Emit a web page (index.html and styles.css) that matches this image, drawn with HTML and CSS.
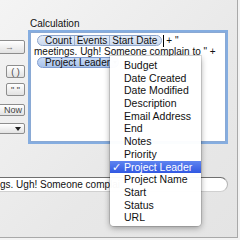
FILE: index.html
```html
<!DOCTYPE html>
<html lang="en">
<head>
  <meta charset="UTF-8" />
  <title>Calculation</title>
  <link rel="stylesheet" href="styles.css">
</head>
<body>

  <div class="window">
    <div class="top">
      <div class="tools">
        <div class="btn btn-wide btn-arrow">&rarr;</div>
        <div class="btn btn-small">( )</div>
        <div class="btn btn-small">" "</div>
        <div class="btn btn-now">Now</div>
        <div class="btn btn-pop"><span class="tri"></span></div>
      </div>

      <div class="calc">
        <div class="label">Calculation</div>
        <div class="editor">
          <div class="line">
            <span class="pill">
              <span class="seg">Count</span><span class="seg">Events</span><span class="seg">Start Date</span>
            </span><span class="caret"></span><span class="txt">+ "</span>
          </div>
          <div class="line">meetings. Ugh! Someone complain to " +</div>
          <div class="line">
            <span class="pill pill-sel"><span class="seg">Project Leader</span><span class="tri tri-pill"></span></span>
          </div>
        </div>
      </div>
    </div>

    <div class="field">
      <span class="field-text">gs. Ugh! Someone complai</span>
    </div>

    <!-- popup menu -->
    <div class="menu">
      <div class="item">Budget</div>
      <div class="item">Date Created</div>
      <div class="item">Date Modified</div>
      <div class="item">Description</div>
      <div class="item">Email Address</div>
      <div class="item">End</div>
      <div class="item">Notes</div>
      <div class="item">Priority</div>
      <div class="item item-on"><span class="check">&#10003;</span>Project Leader</div>
      <div class="item">Project Name</div>
      <div class="item">Start</div>
      <div class="item">Status</div>
      <div class="item">URL</div>
    </div>
  </div>

</body>
</html>
```

FILE: styles.css
```css
* { box-sizing: border-box; }

body {
  margin: 0;
  width: 240px;
  height: 240px;
  overflow: hidden;
  background-color: #f3f3f3;
  font-family: "Liberation Sans", Arial, sans-serif;
  font-size: 10px;
  color: #111;
}

.window {
  position: relative;
  width: 238px;
  height: 238px;
  background: linear-gradient(135deg, #f4f4f4 0%, #e8e8e8 60%, #e4e4e4 100%);
  border-right: 1px solid #a9a9a9;
  border-bottom: 1px solid #a9a9a9;
  overflow: hidden;
}

.top {
  display: flex;
  gap: 5px;
}

/* left column of buttons */
.tools {
  width: 25px;
  padding-top: 40px;
  display: flex;
  flex-direction: column;
  align-items: flex-end;
}

.btn {
  height: 14px;
  border: 1px solid #8d8d8d;
  border-radius: 2px;
  background: linear-gradient(#ffffff, #e2e2e2);
  display: flex;
  align-items: center;
  justify-content: center;
  font-size: 9px;
  color: #444;
  flex-shrink: 0;
}

.btn-wide {
  width: 40px;
  color: #777;
  justify-content: flex-end;
  padding-right: 10px;
}

.btn-small {
  width: 19px;
  height: 13px;
  margin-top: 11px;
}

.btn-small + .btn-small {
  margin-top: 5px;
}

.btn-now {
  width: 34px;
  height: 12px;
  margin-top: 8px;
  justify-content: flex-end;
  padding-right: 2px;
}

.btn-pop {
  width: 40px;
  height: 11px;
  margin-top: 7px;
  justify-content: flex-end;
  padding-right: 3px;
}

.tri {
  width: 0;
  height: 0;
  border-left: 3px solid transparent;
  border-right: 3px solid transparent;
  border-top: 4px solid #222;
}

/* calculation editor */
.calc {
  width: 196px;
  padding-top: 18px;
}

.label {
  font-size: 10px;
  height: 14px;
  line-height: 11px;
}

.editor {
  height: 110px;
  background: #fff;
  border: 1px solid #8aa9d4;
  box-shadow: 0 0 0 2px #85ade0;
  padding: 2px 3px;
}

.line {
  height: 11px;
  line-height: 11px;
  display: flex;
  align-items: center;
  white-space: nowrap;
}

.pill {
  display: inline-flex;
  align-items: center;
  height: 11px;
  margin-left: 3px;
  padding: 0 2px 0 5px;
  border: 1px solid #8ea6cd;
  border-radius: 6px;
  background: linear-gradient(#e4ecf8, #cbd9ee);
}

.seg {
  padding: 0 2px;
  border-left: 1px solid #9db0cf;
  line-height: 9px;
}

.seg:first-child {
  border-left: none;
}

.pill-sel {
  background: linear-gradient(#c9dbf6, #a9c3ec);
  border-color: #7f9cd0;
  padding-right: 1px;
}

.tri-pill {
  border-left-width: 2px;
  border-right-width: 2px;
  border-top: 3px solid #5a6f95;
  margin-left: 1px;
}

.caret {
  width: 1px;
  height: 12px;
  background: #000;
  margin: 0 2px 0 1px;
}

/* bottom text field */
.field {
  margin-top: 35px;
  width: 228px;
  height: 15px;
  background: #fff;
  border-top: 1px solid #6f6f6f;
  border-right: 1px solid #b5b5b5;
  border-bottom: 1px solid #d0d0d0;
  border-radius: 0 8px 8px 0;
  white-space: nowrap;
  line-height: 13px;
}

.field-text {
  display: block;
}

/* popup menu over the editor */
.menu {
  position: absolute;
  left: 110px;
  top: 56px;
  width: 91px;
  height: 170px;
  padding-top: 3px;
  background: rgba(255, 255, 255, 0.97);
  border-radius: 0 0 4px 4px;
  box-shadow: 0 2px 6px rgba(0, 0, 0, 0.35), 0 0 0 1px rgba(0, 0, 0, 0.12);
  font-size: 10.5px;
}

.item {
  position: relative;
  height: 12.7px;
  line-height: 12.7px;
  padding-left: 14px;
  white-space: nowrap;
}

.item-on {
  background: linear-gradient(#5f84f0, #3158e2);
  color: #fff;
}

.check {
  position: absolute;
  left: 2px;
  top: 0;
}
```
